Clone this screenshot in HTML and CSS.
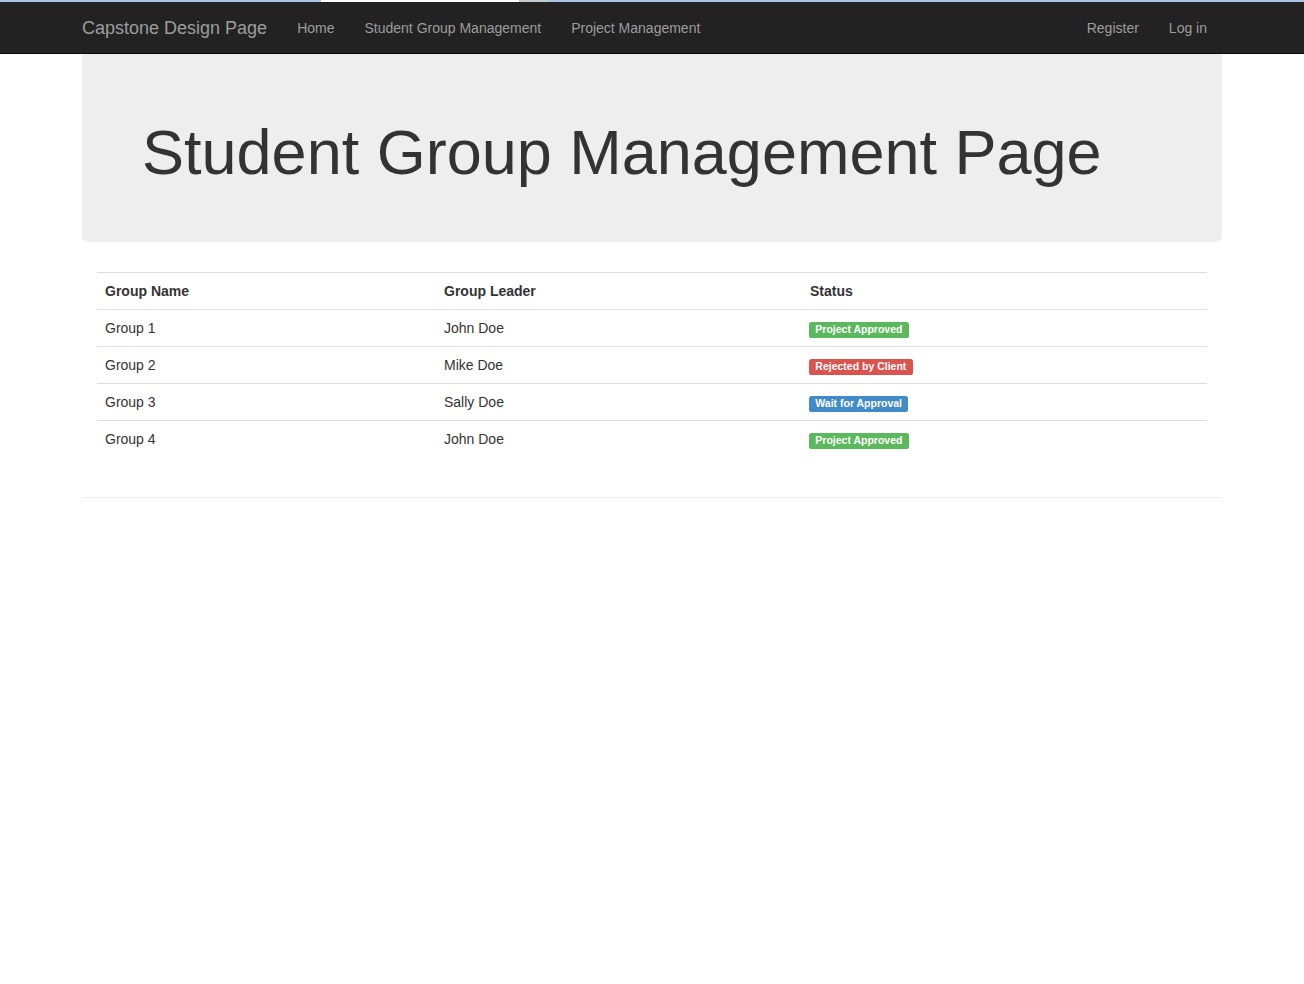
FILE: index.html
```html
<!DOCTYPE html>
<html lang="en">
<head>
<meta charset="utf-8">
<title>Student Group Management Page</title>
<link rel="stylesheet" href="styles.css">
</head>
<body>
<div class="topstrip">
  <span class="strip-a"></span><span class="strip-b"></span><span class="strip-c"></span><span class="strip-d"></span>
</div>
<nav class="navbar">
  <div class="container nav-inner">
    <a class="brand" href="#">Capstone Design Page</a>
    <ul class="nav">
      <li><a href="#">Home</a></li>
      <li><a href="#">Student Group Management</a></li>
      <li><a href="#">Project Management</a></li>
    </ul>
    <ul class="nav nav-right">
      <li><a href="#">Register</a></li>
      <li><a href="#">Log in</a></li>
    </ul>
  </div>
</nav>
<div class="container">
  <div class="jumbotron">
    <h1>Student Group Management Page</h1>
  </div>
  <div class="table-wrap">
    <table class="table">
      <thead>
        <tr><th class="c1">Group Name</th><th class="c2">Group Leader</th><th>Status</th></tr>
      </thead>
      <tbody>
        <tr><td>Group 1</td><td>John Doe</td><td><span class="label label-success">Project Approved</span></td></tr>
        <tr><td>Group 2</td><td>Mike Doe</td><td><span class="label label-danger">Rejected by Client</span></td></tr>
        <tr><td>Group 3</td><td>Sally Doe</td><td><span class="label label-primary">Wait for Approval</span></td></tr>
        <tr><td>Group 4</td><td>John Doe</td><td><span class="label label-success">Project Approved</span></td></tr>
      </tbody>
    </table>
  </div>
  <hr class="divider">
</div>
</body>
</html>
```

FILE: styles.css
```css
* { box-sizing: border-box; }
html, body { margin: 0; padding: 0; }
body {
  font-family: "Liberation Sans", Arial, Helvetica, sans-serif;
  font-size: 14px;
  line-height: 1.428571;
  color: #333;
  background: #fff;
}
a { text-decoration: none; }

.topstrip { height: 2px; display: flex; background: #a9c4e6; }
.strip-a { width: 321px; background: #a9c4e6; }
.strip-b { width: 198px; background: #ffffff; }
.strip-c { width: 29px; background: #c4c8cf; }
.strip-d { flex: 1; background: #a9c4e6; }

.container { width: 1170px; margin: 0 auto; padding: 0 15px; }

.navbar {
  background: #222;
  border-bottom: 1px solid #080808;
  height: 52px;
}
.nav-inner { display: flex; height: 51px; }
.brand {
  display: block;
  margin-left: -15px;
  padding: 16px 15px 15px;
  font-size: 18px;
  line-height: 20px;
  color: #9d9d9d;
}
.nav { display: flex; list-style: none; margin: 0; padding: 0; }
.nav li a {
  display: block;
  padding: 16px 15px 15px;
  line-height: 20px;
  color: #9d9d9d;
}
.nav-right { margin-left: auto; }

.jumbotron {
  background: #eee;
  border-radius: 0 0 6px 6px;
  padding: 44px 60px 45px;
  margin-bottom: 30px;
}
.jumbotron h1 {
  margin: 20px 0 10px;
  font-size: 63px;
  font-weight: 500;
  line-height: 1.1;
  color: inherit;
}

.table-wrap { padding: 0 15px; margin-top: 1px; }
.table { width: 100%; border-collapse: collapse; border-spacing: 0; margin-bottom: 20px; }
.table th, .table td {
  padding: 8px;
  line-height: 20px;
  text-align: left;
  vertical-align: top;
  border-top: 1px solid #ddd;
}
.table th { font-weight: bold; }
.table .c1 { width: 339px; }
.table .c2 { width: 366px; }

.label {
  display: inline-block;
  margin-left: -1px;
  padding: 0.2em 0.6em 0.3em;
  font-size: 10.5px;
  font-weight: bold;
  line-height: 1;
  color: #fff;
  border-radius: 0.25em;
  vertical-align: baseline;
  white-space: nowrap;
}
.label-success { background: #5cb85c; }
.label-danger { background: #d9534f; }
.label-primary { background: #428bca; }

.divider { border: 0; border-top: 1px solid #eee; margin: 40px 0 20px; }
```
